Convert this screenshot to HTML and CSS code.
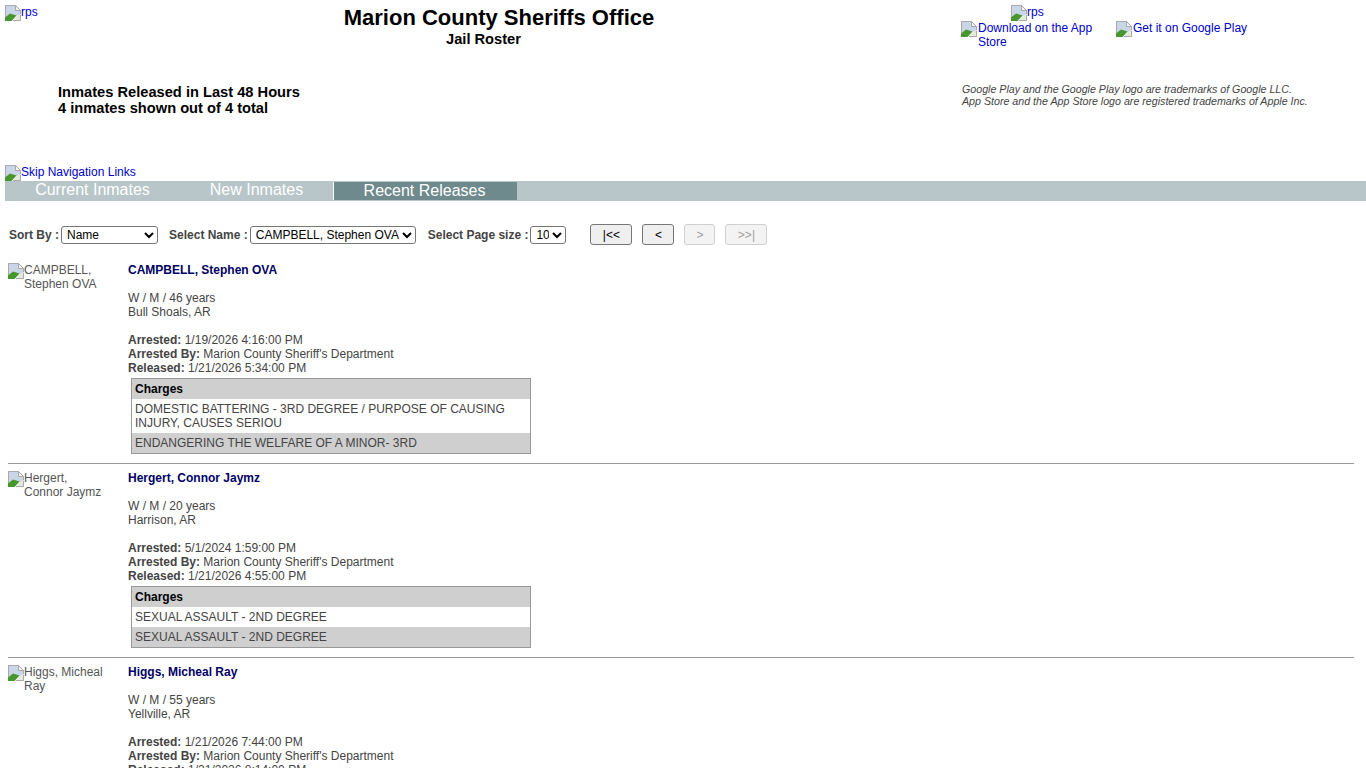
FILE: index.html
```html
<!DOCTYPE html>
<html lang="en">

<head>
    <meta charset="UTF-8">
    <meta name="viewport" content="width=device-width, initial-scale=1.0">
    <title>Jail Roster</title>
    <link rel="stylesheet" href="styles.css">
</head>

<body>
    <svg class="defs" width="0" height="0" aria-hidden="true">
        <symbol id="broken" viewBox="0 0 16 16">
            <path d="M0 0H10.5L16 5.5V9.5L0 15Z" fill="#c9d6e8" />
            <path d="M0.5 14V0.5H10.5L15.5 5.5V9" fill="none" stroke="#a9a9a9" />
            <path d="M10.5 0.5V5.5H15.5Z" fill="#f4f4f4" stroke="#a9a9a9" />
            <path d="M0 16V12.5L5 8.5L11.5 10.5L6.5 16Z" fill="#47962f" />
            <path d="M11 11.5L16 9.5V16H8Z" fill="#e4ead9" />
            <path d="M8 15.5H15.5V10" fill="none" stroke="#a9a9a9" />
        </symbol>
    </svg>

    <header class="top">
        <div class="top-left">
            <div class="title-row">
                <a class="pic-link" href="#"><svg class="broken"><use href="#broken" /></svg>rps</a>
                <div class="title">
                    <h1>Marion County Sheriffs Office</h1>
                    <h2>Jail Roster</h2>
                </div>
            </div>
            <div class="counts">
                <div>Inmates Released in Last 48 Hours</div>
                <div>4 inmates shown out of 4 total</div>
            </div>
        </div>
        <div class="top-right">
            <a class="pic-link rps" href="#"><svg class="broken"><use href="#broken" /></svg>rps</a>
            <div class="stores">
                <a class="pic-link store" href="#"><svg class="broken"><use href="#broken" /></svg><span>Download on the App Store</span></a>
                <a class="pic-link store" href="#"><svg class="broken"><use href="#broken" /></svg><span>Get it on Google Play</span></a>
            </div>
            <p class="legal">Google Play and the Google Play logo are trademarks of Google LLC.<br>App Store and the App Store logo are registered trademarks of Apple Inc.</p>
        </div>
    </header>

    <a class="pic-link skip" href="#"><svg class="broken"><use href="#broken" /></svg>Skip Navigation Links</a>
    <nav class="tabs">
        <a class="tab current" href="#">Current Inmates</a>
        <a class="tab new" href="#">New Inmates</a>
        <a class="tab is-selected" href="#">Recent Releases</a>
    </nav>

    <form class="filters">
        <label>Sort By :</label>
        <select class="sort"><option>Name</option></select>
        <label>Select Name :</label>
        <select class="name"><option>CAMPBELL, Stephen OVA</option></select>
        <label>Select Page size :</label>
        <select class="size"><option>10</option></select>
        <div class="pager">
            <button class="wide" type="button">|&lt;&lt;</button>
            <button class="narrow" type="button">&lt;</button>
            <button class="next" type="button" disabled>&gt;</button>
            <button class="wide" type="button" disabled>&gt;&gt;|</button>
        </div>
    </form>

    <main class="roster">
        <article class="inmate">
            <div class="photo"><svg class="broken"><use href="#broken" /></svg><span>CAMPBELL, Stephen OVA</span></div>
            <div class="details">
                <h3>CAMPBELL, Stephen OVA</h3>
                <p>W / M / 46 years<br>Bull Shoals, AR</p>
                <p><b>Arrested:</b> 1/19/2026 4:16:00 PM<br><b>Arrested By:</b> Marion County Sheriff's Department<br><b>Released:</b> 1/21/2026 5:34:00 PM</p>
                <table class="charges">
                    <tr><th>Charges</th></tr>
                    <tr><td>DOMESTIC BATTERING - 3RD DEGREE / PURPOSE OF CAUSING INJURY, CAUSES SERIOU</td></tr>
                    <tr class="alt"><td>ENDANGERING THE WELFARE OF A MINOR- 3RD</td></tr>
                </table>
            </div>
        </article>

        <article class="inmate">
            <div class="photo"><svg class="broken"><use href="#broken" /></svg><span>Hergert, Connor Jaymz</span></div>
            <div class="details">
                <h3>Hergert, Connor Jaymz</h3>
                <p>W / M / 20 years<br>Harrison, AR</p>
                <p><b>Arrested:</b> 5/1/2024 1:59:00 PM<br><b>Arrested By:</b> Marion County Sheriff's Department<br><b>Released:</b> 1/21/2026 4:55:00 PM</p>
                <table class="charges">
                    <tr><th>Charges</th></tr>
                    <tr><td>SEXUAL ASSAULT - 2ND DEGREE</td></tr>
                    <tr class="alt"><td>SEXUAL ASSAULT - 2ND DEGREE</td></tr>
                </table>
            </div>
        </article>

        <article class="inmate">
            <div class="photo"><svg class="broken"><use href="#broken" /></svg><span>Higgs, Micheal Ray</span></div>
            <div class="details">
                <h3>Higgs, Micheal Ray</h3>
                <p>W / M / 55 years<br>Yellville, AR</p>
                <p><b>Arrested:</b> 1/21/2026 7:44:00 PM<br><b>Arrested By:</b> Marion County Sheriff's Department<br><b>Released:</b> 1/21/2026 8:14:00 PM</p>
            </div>
        </article>
    </main>
</body>

</html>
```

FILE: styles.css
```css
html,
body {
    height: 100%;
    overflow: hidden;
}

body {
    margin: 0;
    padding: 0 0 0 5px;
    font-family: "Liberation Sans", Arial, sans-serif;
    font-size: 12px;
    line-height: 14px;
    color: #444;
    background-color: #fff;
}

.defs {
    position: absolute;
}

.broken {
    width: 16px;
    height: 16px;
    flex: none;
    vertical-align: top;
}

.pic-link {
    color: #00c;
    text-decoration: none;
}

.top {
    display: grid;
    grid-template-columns: 956px 1fr;
    height: 165px;
}

.title-row {
    display: grid;
    grid-template-columns: 50px 1fr;
    padding-top: 5px;
    padding-right: 18px;
}

.title {
    text-align: center;
    color: #000;
}

.title h1 {
    margin: 0;
    font-size: 22px;
    line-height: 25px;
}

.title h2 {
    margin: 1px 31px 0 0;
    font-size: 14.67px;
    line-height: 17px;
}

.counts {
    margin: 36px 0 0 53px;
    font-size: 14.67px;
    line-height: 16px;
    font-weight: bold;
    color: #000;
}

.top-right {
    padding-top: 5px;
}

.rps {
    display: block;
    margin-left: 50px;
    height: 16px;
}

.stores {
    display: flex;
    gap: 15px;
}

.store {
    display: flex;
    gap: 1px;
    width: 140px;
}

.store span {
    display: block;
}

.store + .store {
    width: auto;
}

.legal {
    margin: 34px 0 0 1px;
    font-size: 10.67px;
    line-height: 12px;
    font-style: italic;
    white-space: nowrap;
}

.skip {
    display: block;
    height: 16px;
}

.tabs {
    display: flex;
    height: 20px;
    background-color: #b8c6c9;
}

.tab {
    font-size: 16px;
    line-height: 18px;
    text-align: center;
    color: #fff;
    text-decoration: none;
}

.tab.current {
    width: 175px;
}

.tab.new {
    width: 153px;
}

.tab.is-selected {
    box-sizing: border-box;
    width: 183px;
    margin: 1px 0 1px 1px;
    padding-right: 2px;
    line-height: 18px;
    background-color: #6f8a8c;
    box-shadow: -1px 0 0 #fff;
}

.filters {
    display: flex;
    align-items: center;
    height: 21px;
    margin: 23px 0 0 4px;
    font-weight: bold;
}

.filters label {
    margin-right: 2px;
}

.filters select {
    height: 18px;
    margin-right: 12px;
    padding-left: 1px;
    font-family: inherit;
    font-size: 12px;
    color: #000;
    background-color: #fff;
    border: 1px solid #767676;
    border-radius: 3px;
}

.filters .sort {
    width: 97px;
    margin-right: 11px;
}

.name {
    width: 166px;
}

.size {
    width: 36px;
}

.pager {
    display: flex;
    gap: 10px;
    margin-left: 12px;
}

.pager button {
    height: 21px;
    padding: 0;
    font-family: inherit;
    font-size: 12px;
    font-weight: normal;
    color: #000;
    background-color: #efefef;
    border: 1px solid #767676;
    border-radius: 3px;
}

.pager .wide {
    width: 42px;
}

.pager .narrow {
    width: 32px;
}

.pager .next {
    width: 31px;
}

.pager button:disabled {
    color: #a0a0a0;
    background-color: #f3f3f3;
    border-color: #d0d0d0;
}

.roster {
    margin: 18px 12px 0 3px;
}

.inmate {
    display: flex;
    border-bottom: 1px solid #999;
    padding-bottom: 9px;
    margin-bottom: 7px;
}

.photo {
    display: flex;
    width: 120px;
    flex: none;
    color: #555;
}

.photo span {
    width: 84px;
}

.details h3 {
    margin: 0 0 14px;
    font-size: 12px;
    line-height: 14px;
    color: #006;
}

.details p {
    margin: 0 0 14px;
}

.charges {
    width: 400px;
    margin: -11px 0 0 3px;
    border-collapse: collapse;
    border: 1px solid #999;
}

.charges th,
.charges td {
    padding: 3px;
    text-align: left;
    font-weight: normal;
}

.charges th {
    font-weight: bold;
    color: #000;
    background-color: #cfcfcf;
}

.charges .alt td {
    background-color: #cfcfcf;
}
```
